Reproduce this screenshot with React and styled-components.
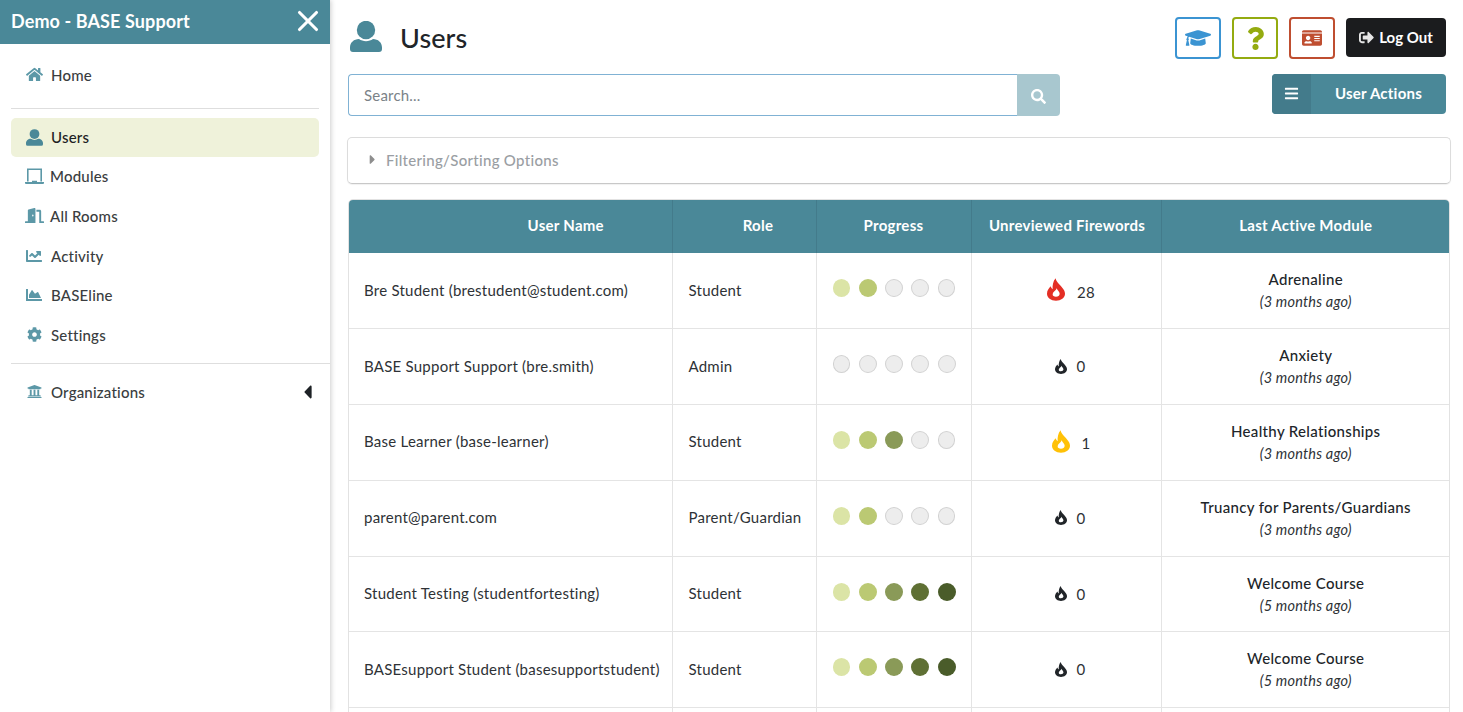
import React from 'react'
import styled, { createGlobalStyle } from 'styled-components'
import { X } from 'lucide-react'
import {
  FaHome, FaDoorOpen, FaChartLine, FaChartArea, FaCog, FaUniversity,
  FaCaretLeft, FaCaretRight, FaGraduationCap, FaQuestion, FaIdCard, FaSignOutAlt, FaBars,
  FaSearch,
} from 'react-icons/fa'

const teal = '#4a8898'

const users = [
  { name: 'Bre Student (brestudent@student.com)', role: 'Student', progress: 2, fire: 28, level: 'hot', module: 'Adrenaline', ago: '3 months ago' },
  { name: 'BASE Support Support (bre.smith)', role: 'Admin', progress: 0, fire: 0, level: 'none', module: 'Anxiety', ago: '3 months ago' },
  { name: 'Base Learner (base-learner)', role: 'Student', progress: 3, fire: 1, level: 'warm', module: 'Healthy Relationships', ago: '3 months ago' },
  { name: 'parent@parent.com', role: 'Parent/Guardian', progress: 2, fire: 0, level: 'none', module: 'Truancy for Parents/Guardians', ago: '3 months ago' },
  { name: 'Student Testing (studentfortesting)', role: 'Student', progress: 5, fire: 0, level: 'none', module: 'Welcome Course', ago: '5 months ago' },
  { name: 'BASEsupport Student (basesupportstudent)', role: 'Student', progress: 5, fire: 0, level: 'none', module: 'Welcome Course', ago: '5 months ago' },
]

const dotColors = ['#dbe4a6', '#bbc973', '#8a9a58', '#5f7034', '#4a5c2a']

// rounder and wider than the icon-pack user glyph
function PersonIcon() {
  return (
    <svg viewBox="0 0 32 31" fill="currentColor">
      <circle cx="16" cy="9" r="9.2" />
      <path d="M3 31Q0 31 0 28V26.5C0 21.5 4 18 9 18C11 19.4 13.4 20.2 16 20.2C18.6 20.2 21 19.4 23 18C28 18 32 21.5 32 26.5V28Q32 31 29 31Z" />
    </svg>
  )
}

function LaptopIcon() {
  return (
    <svg viewBox="0 0 19 16" fill="currentColor">
      <path d="M2 0H17V13H15.4V1.6H3.6V13H2Z" />
      <path d="M0 13.5H7V12.3H12V13.5H19V14.5Q19 15.5 18 15.5H1Q0 15.5 0 14.5Z" />
    </svg>
  )
}

function FlameIcon() {
  return (
    <svg viewBox="0 0 54 67" fill="currentColor" fillRule="evenodd">
      <path d="M26 0C28 12 36 16 44 26C50 33 54 39 54 46C54 58 42 67 27 67C12 67 0 58 0 46C0 36 6 30 11 24C12 28 14 31 17 33C16 22 18 8 26 0ZM29 30C28 36 18 40 17 47C16 53 21 55 27 55C33 55 38 52 38 46C38 40 31 36 29 30Z" />
    </svg>
  )
}

const GlobalStyle = createGlobalStyle`
  html, body {
    margin: 0;
    height: 100%;
    overflow: hidden;
    background: #fff;
  }
  body {
    font-family: Lato, "Open Sans", sans-serif;
    color: #212529;
  }
`

const Page = styled.div`
  display: flex;
  height: 712px;
  overflow: hidden;
`

const Sidebar = styled.aside`
  width: 330px;
  flex-shrink: 0;
  background: #fff;
  box-shadow: 1px 0 5px rgba(0, 0, 0, 0.2);
  z-index: 1;
`

const SideHeader = styled.div`
  height: 44px;
  box-sizing: border-box;
  background: ${teal};
  color: #fff;
  display: flex;
  align-items: center;
  justify-content: space-between;
  padding: 0 5px 2px 11px;
  font-size: 18px;
  font-weight: 700;
  letter-spacing: 0.1px;
`

const NavList = styled.nav`
  padding: ${(p) => p.$padding || '0 11px'};
`

const NavItem = styled.div`
  height: 39px;
  box-sizing: border-box;
  margin-bottom: ${(p) => (p.$active ? '-0.3px' : '0.7px')};
  display: flex;
  align-items: center;
  padding: 0 15px ${(p) => (p.$active ? 1 : 0)}px;
  gap: ${(p) => p.$gap || 8}px;
  border-radius: 5px;
  font-size: 15px;
  font-weight: 500;
  letter-spacing: 0.2px;
  color: ${(p) => (p.$active ? '#1d2124' : '#3a3d40')};
  background: ${(p) => (p.$active ? '#eff2da' : 'transparent')};
  svg {
    color: ${(p) => (p.$active ? teal : '#5c98a7')};
    width: ${(p) => p.$icon || 17}px;
    height: ${(p) => p.$icon || 17}px;
    margin-left: ${(p) => p.$nudge || 0}px;
    flex-shrink: 0;
  }
`

const OrgRow = styled(NavItem)`
  padding: 0 18px 0 26px;
  margin-top: 8px;
  justify-content: space-between;
`

const OrgLabel = styled.span`
  display: flex;
  align-items: center;
  gap: 9px;
`

const Caret = styled(FaCaretLeft)`
  && {
    color: #1e2226;
    width: 9px;
    height: 22px;
    margin-left: 0;
  }
`

const Divider = styled.hr`
  border: 0;
  border-top: 1px solid #dedede;
  margin: ${(p) => p.$margin};
`

const Main = styled.main`
  flex: 1;
  min-width: 0;
  padding: 17px 12px 0 17px;
`

const TopBar = styled.div`
  display: flex;
  justify-content: space-between;
  align-items: flex-start;
  height: 57px;
  padding-right: 5px;
`

const Title = styled.h1`
  margin: 1px 0 0;
  display: flex;
  align-items: center;
  gap: 18px;
  font-size: 27px;
  line-height: 40px;
  font-weight: 500;
  letter-spacing: 0.1px;
  color: #212529;
  padding-left: 3px;
  svg {
    color: ${teal};
    width: 32px;
    height: 31px;
    margin-top: -3px;
  }
`

const TopActions = styled.div`
  display: flex;
  gap: 11px;
`

const IconButton = styled.button`
  width: 46px;
  height: 42px;
  border: 2px solid ${(p) => p.$color};
  border-radius: 4px;
  background: #fff;
  color: ${(p) => p.$color};
  font-size: ${(p) => p.$size}px;
  padding: 0;
  display: flex;
  align-items: center;
  justify-content: center;
`

const LogOut = styled.button`
  width: 100px;
  height: 39px;
  margin-top: 1px;
  border: 0;
  border-radius: 4px;
  background: #1b1c1e;
  color: #fff;
  font: 700 15px Lato, sans-serif;
  display: flex;
  align-items: center;
  justify-content: center;
  gap: 5px;
  padding: 0 0 2px;
  svg {
    font-size: 15px;
    color: #e6e6e6;
    margin-top: 2px;
  }
`

const SearchRow = styled.div`
  display: flex;
  justify-content: space-between;
  align-items: flex-start;
  padding: 0 5px 0 1px;
  height: 63px;
`

const SearchGroup = styled.div`
  display: flex;
  width: 712px;
  height: 42px;
`

const SearchInput = styled.input`
  flex: 1;
  min-width: 0;
  box-sizing: border-box;
  border: 1px solid #80b2d4;
  border-right: 0;
  border-radius: 4px 0 0 4px;
  padding: 0 15px;
  font: 400 15px Lato, sans-serif;
  letter-spacing: 0.2px;
  color: #333;
  outline: 0;
  &::placeholder {
    color: #7b8288;
    opacity: 1;
  }
`

const SearchButton = styled.button`
  width: 43px;
  border: 0;
  border-radius: 0 4px 4px 0;
  background: #a8c7cf;
  color: #fff;
  font-size: 15px;
  padding: 3px 0 0;
  display: flex;
  align-items: center;
  justify-content: center;
`

const ActionsButton = styled.button`
  width: 174px;
  height: 40px;
  border: 0;
  border-radius: 4px;
  padding: 0;
  background: ${teal};
  color: #fff;
  font: 700 15px Lato, sans-serif;
  letter-spacing: 0.22px;
  display: flex;
  overflow: hidden;
`

const ActionsIcon = styled.span`
  width: 39px;
  height: 100%;
  background: #437b8b;
  display: flex;
  align-items: center;
  justify-content: center;
  font-size: 15px;
  padding-bottom: 2px;
  box-sizing: border-box;
`

const ActionsLabel = styled.span`
  flex: 1;
  align-self: center;
  text-align: center;
  padding-bottom: 2px;
`

const FilterPanel = styled.div`
  height: 47px;
  box-sizing: border-box;
  border: 1px solid #dcdcdc;
  border-bottom-color: #c8c8c8;
  border-radius: 5px;
  display: flex;
  align-items: center;
  gap: 10px;
  padding: 0 0 2px 21px;
  font-size: 15px;
  font-weight: 500;
  letter-spacing: 0.3px;
  color: #9a9ea3;
  margin-bottom: 15px;
  box-shadow: 0 1px 1px rgba(0, 0, 0, 0.06);
  svg {
    width: 7px;
    height: 15px;
    color: #8e8e8e;
  }
`

const TableWrap = styled.div`
  margin: 0 1px;
  border: 1px solid #e2e2e2;
  border-radius: 5px;
  overflow: hidden;
`

const Table = styled.table`
  width: 1101px;
  table-layout: fixed;
  border-collapse: collapse;
  font-size: 15px;
`

const HeadCell = styled.th`
  width: ${(p) => p.$w}px;
  height: 53px;
  padding: 0 15px 4px ${(p) => 15 + (p.$shift || 0)}px;
  box-sizing: border-box;
  background: ${teal};
  color: #fff;
  font-size: 15px;
  font-weight: 700;
  letter-spacing: 0.27px;
  text-align: center;
  border-left: 1px solid #437b8b;
  white-space: nowrap;
  &:first-child {
    border-left: 0;
  }
`

const Row = styled.tr`
  height: 75.8px;
  border-top: 1px solid #e4e4e4;
  &:first-child {
    border-top: 0;
  }
`

const Cell = styled.td`
  padding: 0 15px 2px;
  box-sizing: border-box;
  border-left: 1px solid #e4e4e4;
  color: #2e3236;
  font-size: 15px;
  letter-spacing: 0.24px;
  white-space: nowrap;
  text-align: ${(p) => (p.$center ? 'center' : 'left')};
  &:first-child {
    border-left: 0;
  }
  &:nth-child(2) {
    padding-left: 16px;
  }
`

const Dots = styled.div`
  display: flex;
  justify-content: center;
  gap: 8.4px;
  margin: -3px 0 0 1px;
`

const Dot = styled.span`
  width: 18px;
  height: 18px;
  box-sizing: border-box;
  border-radius: 50%;
  background: ${(p) => p.$color || '#ededed'};
  border: ${(p) => (p.$color ? '0' : '1px solid #d2d2d2')};
`

const flameColors = { hot: '#e42e24', warm: '#ffc107', none: '#212529' }

const FireCount = styled.div`
  display: flex;
  align-items: center;
  justify-content: center;
  padding: ${(p) => (p.$level === 'none' ? '1px 0 0 8px' : '4px 0 0 10px')};
  gap: ${(p) => (p.$level === 'none' ? 10 : 12)}px;
  svg {
    color: ${(p) => flameColors[p.$level]};
    width: ${(p) => (p.$level === 'none' ? 12 : 18)}px;
    height: ${(p) => (p.$level === 'none' ? 15 : 23)}px;
    margin-top: ${(p) => (p.$level === 'none' ? 0 : -4)}px;
  }
`

const ModuleInfo = styled.div`
  padding-top: 2px;
`

const ModuleName = styled.div`
  font-weight: 500;
  color: #212529;
  line-height: 22px;
  letter-spacing: 0.33px;
`

const ModuleAgo = styled.div`
  font-style: italic;
  font-size: 14.5px;
  color: #2e3236;
  line-height: 22px;
  letter-spacing: 0.2px;
  margin-top: 1px;
`

const navItems = [
  { label: 'Modules', icon: <LaptopIcon />, size: 19, gap: 6, nudge: -1 },
  { label: 'All Rooms', icon: <FaDoorOpen />, size: 19, gap: 6, nudge: -1 },
  { label: 'Activity', icon: <FaChartLine />, size: 16 , gap: 9 },
  { label: 'BASEline', icon: <FaChartArea />, size: 16, gap: 9 },
  { label: 'Settings', icon: <FaCog />, size: 15, gap: 9, nudge: 1 },
]

export default function App() {
  return (
    <Page>
      <GlobalStyle />
      <Sidebar>
        <SideHeader>
          Demo - BASE Support
          <X size={34} strokeWidth={2.2} />
        </SideHeader>
        <NavList $padding="11px 11px 0">
          <NavItem><FaHome />Home</NavItem>
        </NavList>
        <Divider $margin="14px 11px 9px" />
        <NavList>
          <NavItem $active><PersonIcon />Users</NavItem>
          {navItems.map((item) => (
            <NavItem key={item.label} $gap={item.gap} $icon={item.size} $nudge={item.nudge}>{item.icon}{item.label}</NavItem>
          ))}
        </NavList>
        <Divider $margin="9px 0 0 11px" />
        <OrgRow $icon={15} $nudge={1}>
          <OrgLabel><FaUniversity />Organizations</OrgLabel>
          <Caret />
        </OrgRow>
      </Sidebar>
      <Main>
        <TopBar>
          <Title><PersonIcon />Users</Title>
          <TopActions>
            <IconButton $color="#3b94d2" $size={26}><FaGraduationCap /></IconButton>
            <IconButton $color="#94ab10" $size={23}><FaQuestion /></IconButton>
            <IconButton $color="#bf4e30" $size={20}><FaIdCard /></IconButton>
            <LogOut><FaSignOutAlt />Log Out</LogOut>
          </TopActions>
        </TopBar>
        <SearchRow>
          <SearchGroup>
            <SearchInput placeholder="Search..." />
            <SearchButton><FaSearch /></SearchButton>
          </SearchGroup>
          <ActionsButton>
            <ActionsIcon><FaBars /></ActionsIcon>
            <ActionsLabel>User Actions</ActionsLabel>
          </ActionsButton>
        </SearchRow>
        <FilterPanel><FaCaretRight />Filtering/Sorting Options</FilterPanel>
        <TableWrap>
          <Table>
            <thead>
              <tr>
                <HeadCell $w={323} $shift={111}>User Name</HeadCell>
                <HeadCell $w={144} $shift={28}>Role</HeadCell>
                <HeadCell $w={155}>Progress</HeadCell>
                <HeadCell $w={190} $shift={2}>Unreviewed Firewords</HeadCell>
                <HeadCell $w={289}>Last Active Module</HeadCell>
              </tr>
            </thead>
            <tbody>
              {users.map((u) => (
                <Row key={u.name}>
                  <Cell>{u.name}</Cell>
                  <Cell>{u.role}</Cell>
                  <Cell $center>
                    <Dots>
                      {[0, 1, 2, 3, 4].map((i) => (
                        <Dot key={i} $color={i < u.progress ? dotColors[i] : null} />
                      ))}
                    </Dots>
                  </Cell>
                  <Cell $center>
                    <FireCount $level={u.level}><FlameIcon />{u.fire}</FireCount>
                  </Cell>
                  <Cell $center>
                    <ModuleInfo>
                      <ModuleName>{u.module}</ModuleName>
                      <ModuleAgo>({u.ago})</ModuleAgo>
                    </ModuleInfo>
                  </Cell>
                </Row>
              ))}
              <Row>
                <Cell /><Cell /><Cell /><Cell /><Cell />
              </Row>
            </tbody>
          </Table>
        </TableWrap>
      </Main>
    </Page>
  )
}
